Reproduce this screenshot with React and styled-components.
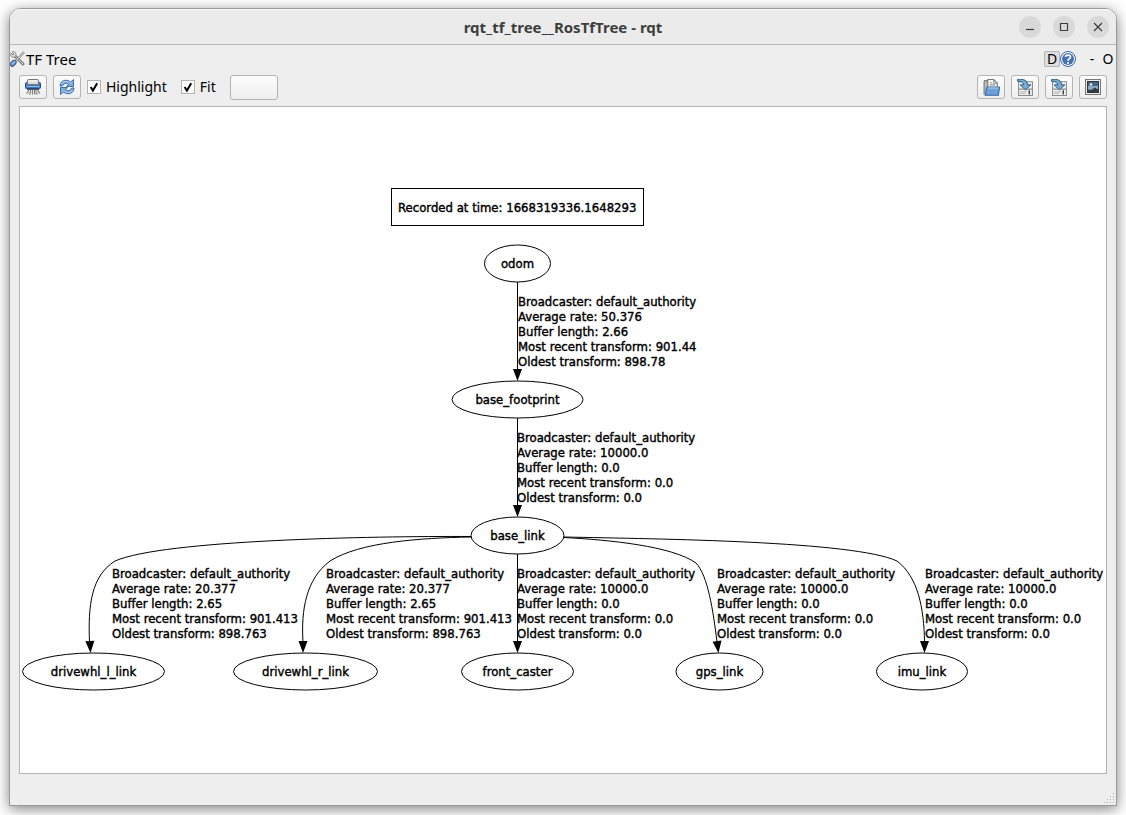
import React from "react";
import styled, { createGlobalStyle, css } from "styled-components";

const GlobalStyle = createGlobalStyle`
  * { box-sizing: border-box; }
  body {
    margin: 0;
    background: #fff;
    color: #000;
    font-family: "Noto Sans", "Open Sans", sans-serif;
    font-size: 14px;
  }
`;

const Desktop = styled.div`
  display: flex;
  min-height: 100vh;
  padding: 8px 9px 9px;
  overflow: hidden;
`;

const Window = styled.main`
  flex: 1;
  display: flex;
  flex-direction: column;
  min-width: 0;
  border: 1px solid #999;
  border-radius: 12px 12px 0 0;
  background: #eee;
  box-shadow: 0 3px 14px rgba(0, 0, 0, 0.5);
`;

const TitleBar = styled.header`
  display: grid;
  grid-template-columns: 1fr auto 1fr;
  align-items: center;
  height: 36px;
  padding: 0 7px;
  border-bottom: 1px solid #b9b9b9;
  border-radius: 11px 11px 0 0;
  background: #ebebeb;
  box-shadow: inset 0 1px #fafafa;
`;

const Title = styled.h1`
  grid-column: 2;
  margin: 0;
  color: #3d3d3d;
  font-size: 15px;
  line-height: 20px;
  font-weight: 700;
`;

const WindowControls = styled.div`
  display: flex;
  justify-content: flex-end;
  gap: 12px;
`;

const RoundButton = styled.button`
  display: grid;
  place-items: center;
  width: 22px;
  height: 22px;
  padding: 0;
  border: 0;
  border-radius: 50%;
  background: #d9d9d9;
`;

const DockBar = styled.div`
  display: flex;
  align-items: center;
  height: 28px;
`;

const DockTitle = styled.h2`
  flex: 1;
  margin: 0;
  font-size: 15px;
  line-height: 20px;
  font-weight: 400;
`;

const DockButton = styled.button`
  display: flex;
  justify-content: center;
  align-items: center;
  width: 16px;
  height: 16px;
  padding: 0;
  border: 0;
  background: none;
  font: inherit;
  line-height: 14px;
  ${(p) =>
    p.$raised &&
    css`
      border: 1px solid #b4b4b4;
      border-radius: 2px;
      background: #dedede;
    `}
`;

const DockGap = styled.span`
  width: 8px;
`;

const Toolbar = styled.div`
  display: flex;
  align-items: center;
  gap: 6px;
  height: 28px;
  padding: 0 9px;
`;

const buttonFace = css`
  border: 1px solid #b4b4b4;
  border-radius: 3px;
  background: linear-gradient(#fdfdfd, #eee);
`;

const ToolButton = styled.button`
  display: grid;
  place-items: center;
  width: 28px;
  height: 24px;
  padding: 0;
  ${buttonFace}
`;

const BlankButton = styled.button`
  width: 48px;
  height: 25px;
  ${buttonFace}
`;

const Spacer = styled.div`
  flex: 1;
`;

const CheckLabel = styled.label`
  display: flex;
  align-items: center;
  gap: 5px;
  margin-right: 8px;
  font-size: 14px;
  line-height: 20px;
`;

const Check = styled.input`
  appearance: none;
  width: 14px;
  height: 14px;
  margin: 0;
  border: 1px solid #b4b4b4;
  background: #fff;
  &:checked {
    background: #fff
      url("data:image/svg+xml,%3Csvg xmlns='http://www.w3.org/2000/svg' viewBox='0 0 12 12'%3E%3Cpath d='M2.6 6 4.9 9.5 9.2 2.2' fill='none' stroke='black' stroke-width='2'/%3E%3C/svg%3E");
  }
`;

const Canvas = styled.section`
  flex: 1;
  display: flex;
  margin: 5px 9px 0;
  border: 1px solid #b4b4b4;
  background: #fff;
`;

const Graph = styled.svg`
  width: 100%;
  min-width: 0;
  font-family: "DejaVu Sans Condensed", "DejaVu Sans", sans-serif;
  font-size: 13px;
  font-stretch: condensed;
`;

const Outline = styled.g`
  fill: none;
  stroke: #000;
`;

const StatusBar = styled.footer`
  display: flex;
  justify-content: flex-end;
  align-items: flex-end;
  height: 31px;
  padding: 2px;
`;

const Icon = ({ size = 16, children }) => (
  <svg width={size} height={size} viewBox="0 0 16 16" aria-hidden="true">
    {children}
  </svg>
);

const ToolsIcon = () => (
  <Icon>
    <path d="M5 5 13 13" stroke="#777" strokeWidth="3" strokeLinecap="round" />
    <path d="M5 5 13 13" stroke="#ddd" strokeWidth="1" strokeLinecap="round" />
    <path d="M2 1 4 3 3 4 1 2C0 5 2 7 5 6L6 4C6 1 4 0 2 1Z" fill="#ddd" stroke="#777" strokeWidth=".8" />
    <path d="M14 1 7 9" stroke="#888" strokeWidth="2.2" />
    <path d="M14 1 7 9" stroke="#eee" strokeWidth=".8" />
    <path d="M.5 12.5C1 10 4 8.500 6 9.500C7 11.500 5 15 2 15.500C.5 15.500 0 14 .5 12.500Z" fill="#6b94c9" stroke="#27456e" />
    <path d="M2 13 5 10.500" stroke="#b9d0ec" />
  </Icon>
);

const ShredderIcon = () => (
  <Icon>
    <path
      d="M3.500 10V12.500L1.500 14.500M5.500 10V14L4 15.500M7.500 10V15.500M9.500 10V15.500M11 10V14L12.500 15.500M13 10V12.500L15 14.500"
      stroke="#808080"
      strokeWidth="1.100"
      fill="none"
    />
    <rect x=".5" y="3.500" width="15" height="6" rx="1" fill="#3f74b5" stroke="#204a87" />
    <path d="M1.500 7.500H14.500" stroke="#8fb5e2" />
    <rect x="2.500" y=".5" width="11" height="5" rx="1" fill="#dcdcdc" stroke="#777" />
    <path d="M4 2H12" stroke="#fff" />
    <path d="M2 10.500H14" stroke="#555" />
  </Icon>
);

const RefreshIcon = () => {
  const arrow = "M1 7C1 1.500 7.500-.5 11.500 3L14.500 .5V7.500H7.500L9.500 5.300C7 3.500 4.500 4.500 3.500 7Z";
  const shine = "M2.500 5C4 2 8 1.500 11.500 4.500L13.500 3";
  return (
    <Icon>
      {[0, 180].map((turn) => (
        <g key={turn} transform={`rotate(${turn} 8 8)`}>
          <path d={arrow} fill="#7ba7db" stroke="#3465a4" strokeWidth=".9" />
          <path d={shine} fill="none" stroke="#c6dbf2" strokeWidth=".8" />
        </g>
      ))}
    </Icon>
  );
};

const OpenIcon = () => (
  <Icon size={17}>
    <path d="M1 14.500V2.500C1 1.800 1.500 1.500 2 1.500H5V8" fill="#bbb" stroke="#777" />
    <path d="M4.500 10V.5H10L13.500 4V10Z" fill="#f4f4f4" stroke="#777" />
    <path d="M10 .5V4h3.500M6.500 3.500h2M6.500 5.500h5" fill="none" stroke="#999" />
    <path d="M3.500 8.500C3.500 7.800 4 7.500 4.500 7.500H15C15.500 7.500 15.600 8 15.500 8.500L14.500 15.300H2Z" fill="#6d9fd8" stroke="#3465a4" />
    <path d="M4.500 8.500h10" stroke="#b8d2ef" />
  </Icon>
);

const SaveAsIcon = () => (
  <Icon size={17}>
    <path d="M1.500 2.500H14.500V15.500H1.500Z" fill="#f3f3f3" stroke="#888" />
    <path d="M2 9.500h12" stroke="#777" />
    <path d="M3 12h7M3 13.500h5" stroke="#bbb" />
    <path d="M11.500 10.500v4" stroke="#000" />
    <path d="M.5 .5C6-.5 10 1.500 10 5.500H13L8 10.300 3 5.500H6.200C6.200 3.300 4 2 .5 2.200Z" fill="#78a9cf" stroke="#235b83" strokeWidth=".9" />
  </Icon>
);

const ImageIcon = () => (
  <Icon>
    <rect x=".5" y=".5" width="15" height="15" fill="#eee" stroke="#777" />
    <rect x="2.500" y="2.500" width="11" height="11" fill="#42638f" stroke="#333" />
    <path d="M3 7H13V11H3Z" fill="#91aac6" />
    <path d="M3 13V10.500L6 11 10 8.500 13 10.500V13Z" fill="#333d46" />
    <circle cx="6" cy="5.500" r="1.300" fill="#fff6c5" />
  </Icon>
);

const HelpIcon = () => (
  <Icon>
    <circle cx="8" cy="8" r="7.500" fill="#fff" stroke="#3465a4" />
    <circle cx="8" cy="8" r="6" fill="#4472b0" />
    <path d="M5.500 6C5.500 3.500 10.500 3.300 10.500 6C10.500 7.700 8 7.700 8 9.700" fill="none" stroke="#fff" strokeWidth="1.700" />
    <circle cx="8" cy="12" r="1.100" fill="#fff" />
  </Icon>
);

const ControlIcon = ({ d }) => (
  <svg width="12" height="12" viewBox="0 0 12 12" aria-hidden="true">
    <path d={d} fill="none" stroke="#3d3d3d" strokeWidth="1.200" />
  </svg>
);

const nodes = [
  { name: "odom", x: 517.5, y: 263.5, rx: 33 },
  { name: "base_footprint", x: 517.5, y: 399.5, rx: 65.5 },
  { name: "base_link", x: 517.5, y: 535.5, rx: 46.5 },
  { name: "drivewhl_l_link", x: 93.5, y: 671.5, rx: 71 },
  { name: "drivewhl_r_link", x: 305.5, y: 671.5, rx: 72 },
  { name: "front_caster", x: 517.5, y: 671.5, rx: 56 },
  { name: "gps_link", x: 719.5, y: 671.5, rx: 43.5 },
  { name: "imu_link", x: 922, y: 671.5, rx: 45.5 },
];

const fixed = { rate: "10000.0", buffer: "0.0", recent: "0.0", oldest: "0.0" };
const wheel = { rate: "20.377", buffer: "2.65", recent: "901.413", oldest: "898.763" };

const edges = [
  { d: "M517.5 282V370", tip: [517.5, 381], lean: 0, x: 518, y: 306, rate: "50.376", buffer: "2.66", recent: "901.44", oldest: "898.78" },
  { d: "M517.5 418V506", tip: [517.5, 517], lean: 0, x: 517, y: 442, ...fixed },
  { d: "M471 536.5C370 536 163 540 115 561C91 576 88 606 89.500 642", tip: [90.5, 653], lean: 3, x: 112, y: 578, ...wheel },
  { d: "M471 537C420 538 360 542 330 561C306 579 301 610 303 642", tip: [303, 653], lean: 0, x: 326, y: 578, ...wheel },
  { d: "M517.5 554V642", tip: [517.5, 653], lean: 0, x: 517, y: 578, ...fixed },
  { d: "M564 537.500C610 540 672 546 696 563C708 576 713 610 717 642", tip: [718.5, 653], lean: 7, x: 717, y: 578, ...fixed },
  { d: "M564 537C660 539 854 541 897 561C918 577 924 608 924.500 642", tip: [924.5, 653], lean: 0, x: 925, y: 578, ...fixed },
];

function EdgeLabel({ edge }) {
  const lines = [
    "Broadcaster: default_authority",
    `Average rate: ${edge.rate}`,
    `Buffer length: ${edge.buffer}`,
    `Most recent transform: ${edge.recent}`,
    `Oldest transform: ${edge.oldest}`,
  ];
  return lines.map((line, i) => (
    <text key={line} x={edge.x} y={edge.y + i * 15}>
      {line}
    </text>
  ));
}

function TfGraph() {
  return (
    <Graph viewBox="20 107 1086 666" role="img" aria-label="Transform tree">
      <Outline>
        <rect x="391.5" y="188.5" width="252" height="37" />
        {nodes.map((n) => (
          <ellipse key={n.name} cx={n.x} cy={n.y} rx={n.rx} ry="18.5" />
        ))}
        {edges.map((e) => (
          <path key={e.d} d={e.d} />
        ))}
      </Outline>
      {edges.map((e) => (
        <path
          key={e.d}
          d="M0 0L-4.500 -12H4.500Z"
          transform={`translate(${e.tip[0]} ${e.tip[1]}) rotate(${-e.lean})`}
        />
      ))}
      <g stroke="#000" strokeWidth=".4">
        <text x="398" y="212">Recorded at time: 1668319336.1648293</text>
        {nodes.map((n) => (
          <text key={n.name} x={n.x} y={n.y + 4.5} textAnchor="middle">
            {n.name}
          </text>
        ))}
        {edges.map((e) => (
          <EdgeLabel key={e.d} edge={e} />
        ))}
      </g>
    </Graph>
  );
}

const gripDots = [
  [9, 0], [6, 3], [9, 3], [3, 6], [6, 6], [9, 6], [0, 9], [3, 9], [6, 9], [9, 9],
];

export default function App() {
  return (
    <Desktop>
      <GlobalStyle />
      <Window>
        <TitleBar>
          <Title>rqt_tf_tree__RosTfTree - rqt</Title>
          <WindowControls>
            <RoundButton aria-label="Minimize"><ControlIcon d="M2 8.500H10" /></RoundButton>
            <RoundButton aria-label="Maximize"><ControlIcon d="M2.500 2.500H9.500V9.500H2.500Z" /></RoundButton>
            <RoundButton aria-label="Close"><ControlIcon d="M2 2 10 10M10 2 2 10" /></RoundButton>
          </WindowControls>
        </TitleBar>
        <DockBar>
          <ToolsIcon />
          <DockTitle>TF Tree</DockTitle>
          <DockButton $raised>D</DockButton>
          <DockButton aria-label="Help"><HelpIcon /></DockButton>
          <DockGap />
          <DockButton>-</DockButton>
          <DockButton>O</DockButton>
        </DockBar>
        <Toolbar>
          <ToolButton aria-label="Clear buffer"><ShredderIcon /></ToolButton>
          <ToolButton aria-label="Refresh"><RefreshIcon /></ToolButton>
          <CheckLabel><Check type="checkbox" defaultChecked />Highlight</CheckLabel>
          <CheckLabel><Check type="checkbox" defaultChecked />Fit</CheckLabel>
          <BlankButton aria-label="Fit in view" />
          <Spacer />
          <ToolButton aria-label="Load graph"><OpenIcon /></ToolButton>
          <ToolButton aria-label="Save as DOT"><SaveAsIcon /></ToolButton>
          <ToolButton aria-label="Save as SVG"><SaveAsIcon /></ToolButton>
          <ToolButton aria-label="Save as image"><ImageIcon /></ToolButton>
        </Toolbar>
        <Canvas>
          <TfGraph />
        </Canvas>
        <StatusBar>
          <svg width="10" height="10" aria-hidden="true">
            {gripDots.map(([x, y]) => (
              <rect key={`${x}-${y}`} x={x} y={y} width="1" height="1" fill="#aaa" />
            ))}
          </svg>
        </StatusBar>
      </Window>
    </Desktop>
  );
}
